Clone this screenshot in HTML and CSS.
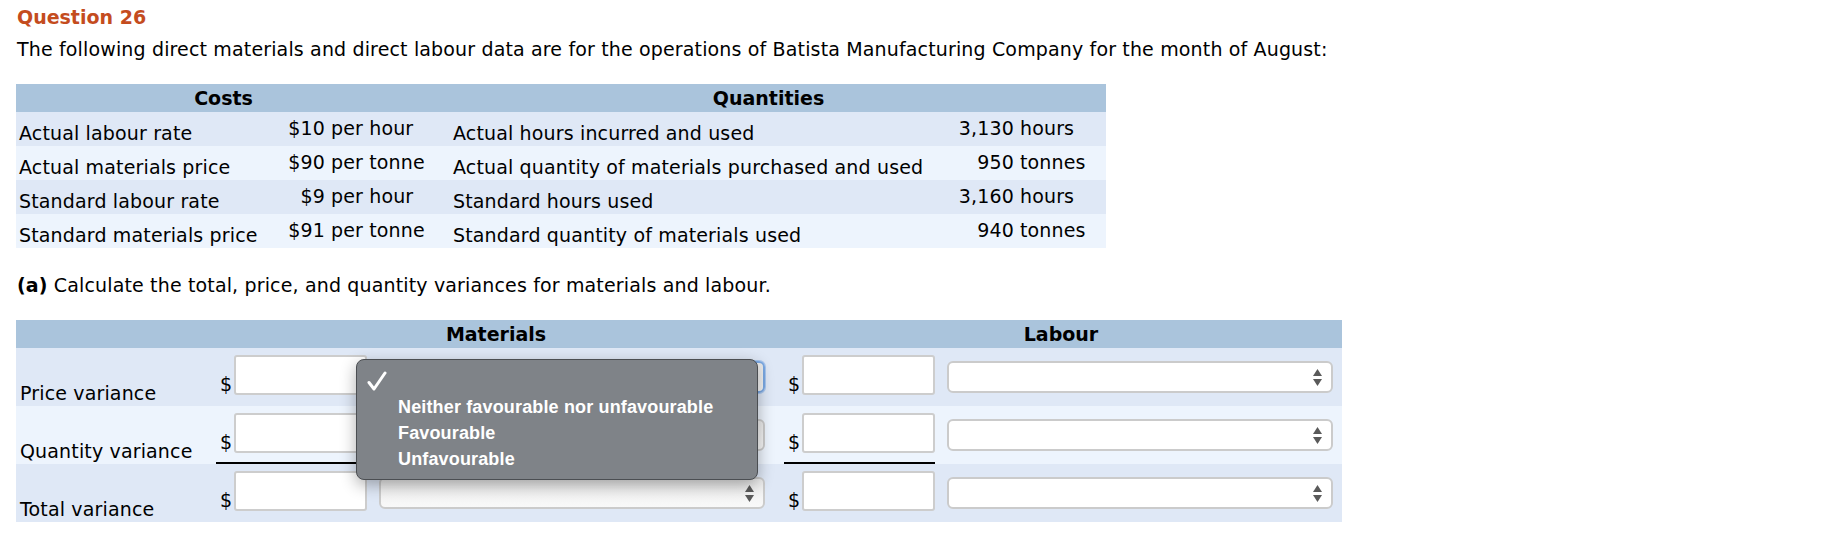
FILE: index.html
```html
<!DOCTYPE html>
<html lang="en">
<head>
<meta charset="utf-8">
<title>Question 26</title>
<link rel="stylesheet" href="styles.css">
</head>
<body>
<div class="page">
  <h2 class="q-title">Question 26</h2>
  <p class="intro">The following direct materials and direct labour data are for the operations of Batista Manufacturing Company for the month of August:</p>

  <div class="data">
    <div class="data-head">
      <div>Costs</div>
      <div>Quantities</div>
    </div>
    <div class="data-row odd">
      <div class="lbl">Actual labour rate</div>
      <div class="num">$10</div>
      <div class="unit">per hour</div>
      <div class="qlbl">Actual hours incurred and used</div>
      <div class="num">3,130</div>
      <div class="unit">hours</div>
    </div>
    <div class="data-row even">
      <div class="lbl">Actual materials price</div>
      <div class="num">$90</div>
      <div class="unit">per tonne</div>
      <div class="qlbl">Actual quantity of materials purchased and used</div>
      <div class="num">950</div>
      <div class="unit">tonnes</div>
    </div>
    <div class="data-row odd">
      <div class="lbl">Standard labour rate</div>
      <div class="num">$9</div>
      <div class="unit">per hour</div>
      <div class="qlbl">Standard hours used</div>
      <div class="num">3,160</div>
      <div class="unit">hours</div>
    </div>
    <div class="data-row even">
      <div class="lbl">Standard materials price</div>
      <div class="num">$91</div>
      <div class="unit">per tonne</div>
      <div class="qlbl">Standard quantity of materials used</div>
      <div class="num">940</div>
      <div class="unit">tonnes</div>
    </div>
  </div>

  <p class="part"><b>(a)</b> Calculate the total, price, and quantity variances for materials and labour.</p>

  <div class="var-table">
    <div class="var-head">
      <div></div>
      <div>Materials</div>
      <div>Labour</div>
    </div>

    <div class="var-row odd">
      <div class="vlbl">Price variance</div>
      <div class="amount"><span class="dollar">$</span><span class="input"></span></div>
      <div class="select mat-sel focused">
        <svg class="arrows" width="9" height="17" viewBox="0 0 9 17"><polygon points="0,7 4.5,0 9,7"/><polygon points="0,10 9,10 4.5,17"/></svg>
        <div class="menu">
          <div class="menu-item"><span class="check-col"><svg class="check" width="20" height="20" viewBox="0 0 20 20"><polyline points="2,11.5 7,18 18,2"/></svg></span></div>
          <div class="menu-item"><span class="check-col"></span>Neither favourable nor unfavourable</div>
          <div class="menu-item"><span class="check-col"></span>Favourable</div>
          <div class="menu-item"><span class="check-col"></span>Unfavourable</div>
        </div>
      </div>
      <div class="amount"><span class="dollar">$</span><span class="input"></span></div>
      <div class="select lab-sel">
        <svg class="arrows" width="9" height="17" viewBox="0 0 9 17"><polygon points="0,7 4.5,0 9,7"/><polygon points="0,10 9,10 4.5,17"/></svg>
      </div>
    </div>

    <div class="var-row even">
      <div class="vlbl">Quantity variance</div>
      <div class="amount underlined"><span class="dollar">$</span><span class="input"></span></div>
      <div class="select mat-sel">
        <svg class="arrows" width="9" height="17" viewBox="0 0 9 17"><polygon points="0,7 4.5,0 9,7"/><polygon points="0,10 9,10 4.5,17"/></svg>
      </div>
      <div class="amount underlined"><span class="dollar">$</span><span class="input"></span></div>
      <div class="select lab-sel">
        <svg class="arrows" width="9" height="17" viewBox="0 0 9 17"><polygon points="0,7 4.5,0 9,7"/><polygon points="0,10 9,10 4.5,17"/></svg>
      </div>
    </div>

    <div class="var-row odd">
      <div class="vlbl">Total variance</div>
      <div class="amount"><span class="dollar">$</span><span class="input"></span></div>
      <div class="select mat-sel">
        <svg class="arrows" width="9" height="17" viewBox="0 0 9 17"><polygon points="0,7 4.5,0 9,7"/><polygon points="0,10 9,10 4.5,17"/></svg>
      </div>
      <div class="amount"><span class="dollar">$</span><span class="input"></span></div>
      <div class="select lab-sel">
        <svg class="arrows" width="9" height="17" viewBox="0 0 9 17"><polygon points="0,7 4.5,0 9,7"/><polygon points="0,10 9,10 4.5,17"/></svg>
      </div>
    </div>
  </div>
</div>
</body>
</html>
```
FILE: styles.css
```css
body {
  margin: 0;
  background: #fff;
  color: #000;
  font-family: "DejaVu Sans", Verdana, sans-serif;
  font-size: 19px;
  letter-spacing: 0.15px;
}

.page {
  padding: 6px 0 0 16px;
}

.q-title {
  margin: 0;
  padding-left: 1px;
  font-size: 19px;
  line-height: 22px;
  font-weight: bold;
  letter-spacing: 0;
  color: #c44c1e;
}

.intro {
  margin: 10px 0 0;
  padding-left: 1px;
  line-height: 22px;
}

/* ---------- data table ---------- */
.data {
  margin-top: 24px;
  width: 1090px;
}

.data-head {
  display: grid;
  grid-template-columns: 415px 675px;
  height: 28px;
  line-height: 28px;
  background: #aac4dc;
  font-weight: bold;
  letter-spacing: 0;
  text-align: center;
}

.data-row {
  display: grid;
  grid-template-columns: 246px 63px 106px 509px 74px 92px;
  height: 34px;
  line-height: 22px;
  white-space: nowrap;
}

.odd { background: #dfe8f6; }
.even { background: #edf4fd; }

.lbl {
  align-self: end;
  padding: 0 0 2px 3px;
}

.qlbl {
  align-self: end;
  padding: 0 0 2px 22px;
}

.num {
  align-self: start;
  padding-top: 5px;
  text-align: right;
}

.unit {
  align-self: start;
  padding: 5px 0 0 6px;
}

.part {
  margin: 26px 0 0;
  padding-left: 1px;
  line-height: 22px;
}

/* ---------- variance table ---------- */
.var-table {
  margin-top: 24px;
  width: 1326px;
}

.var-head {
  display: grid;
  grid-template-columns: 196px 568px 562px;
  height: 28px;
  line-height: 28px;
  background: #aac4dc;
  font-weight: bold;
  letter-spacing: 0;
  text-align: center;
}

.var-row {
  display: grid;
  grid-template-columns: 196px 155px 413px 155px 407px;
  height: 58px;
}

.vlbl {
  align-self: end;
  padding: 0 0 2px 4px;
  line-height: 22px;
  white-space: nowrap;
}

.amount {
  display: flex;
  align-items: flex-end;
  width: 151px;
  margin-left: 4px;
  padding-bottom: 11px;
  box-sizing: border-box;
}

.amount.underlined {
  border-bottom: 2px solid #000;
  padding-bottom: 9px;
}

.dollar {
  width: 18px;
  flex: none;
  padding-left: 4px;
  box-sizing: border-box;
  line-height: 22px;
}

.input {
  width: 133px;
  height: 40px;
  flex: none;
  box-sizing: border-box;
  border: 2px solid #cdcdcd;
  border-radius: 3px;
  background: #fff;
}

.select {
  position: relative;
  align-self: end;
  width: 386px;
  margin: 0 0 13px 12px;
  height: 32px;
  box-sizing: border-box;
  border: 2px solid #cbcbcb;
  border-radius: 6px;
  display: flex;
  justify-content: flex-end;
  align-items: center;
  padding-right: 9px;
}

.mat-sel {
  background: linear-gradient(#ececec, #f9f9f9);
}

.lab-sel {
  background: #fff;
}

.select.focused {
  border-color: #7ba9e4;
  box-shadow: 0 0 0 1px #a9c7ef;
}

.arrows polygon { fill: #5a5a5a; }

/* ---------- dropdown menu overlay ---------- */
.menu {
  position: absolute;
  left: -25px;
  top: -4px;
  z-index: 10;
  width: 402px;
  height: 121px;
  box-sizing: border-box;
  padding: 8px 0 0 10px;
  background: #7f8388;
  border: 1px solid #4b4e52;
  border-radius: 8px;
  box-shadow: 0 5px 16px rgba(0, 0, 0, 0.32);
  color: #fff;
  font-family: "Liberation Sans", Arial, sans-serif;
  font-size: 18px;
  font-weight: bold;
  letter-spacing: 0.15px;
  line-height: 26px;
  white-space: nowrap;
}

.menu-item {
  display: flex;
  align-items: center;
  height: 26px;
}

.check-col {
  width: 31px;
  flex: none;
  display: flex;
  align-items: center;
}

.check polyline {
  fill: none;
  stroke: #fff;
  stroke-width: 3;
  stroke-linecap: round;
  stroke-linejoin: round;
}
```
